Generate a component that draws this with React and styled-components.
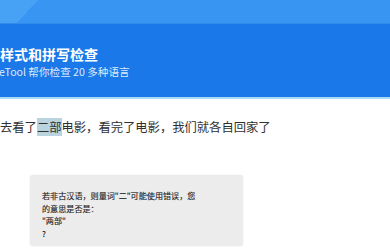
import React from "react";
import styled, { createGlobalStyle } from "styled-components";

const Global = createGlobalStyle`
  html, body { margin: 0; padding: 0; background: #ffffff; }
  body { font-family: "Noto Sans CJK SC", "Noto Sans", sans-serif; overflow: hidden; }
`;

const Page = styled.div`
  width: 390px;
  height: 250px;
  overflow: hidden;
  background: #ffffff;
`;

const Header = styled.header`
  display: flex;
  flex-direction: column;
  border-bottom: 2px solid #a7dbfb;
`;

const TopStrip = styled.div`
  height: 24px;
  background: linear-gradient(132.5deg, #47a2f5 28px, #3895f1 28px);
  box-shadow: inset 0 -1px 0 #2f8be9;
`;

const Banner = styled.div`
  height: 73px;
  box-sizing: border-box;
  background: #1b78e8;
  padding: 21px 0 0 0;
  display: flex;
  flex-direction: column;
  gap: 2px;
  white-space: nowrap;
`;

const Title = styled.h1`
  margin: 0;
  font-size: 14px;
  line-height: 18px;
  font-weight: 700;
  color: #ffffff;
`;

const Subtitle = styled.p`
  margin: 0 0 0 -1px;
  font-size: 10.6px;
  line-height: 14px;
  color: rgba(255, 255, 255, 0.86);
`;

const Body = styled.main`
  display: flex;
  flex-direction: column;
  align-items: flex-start;
  padding-top: 20px;
`;

const Sentence = styled.p`
  margin: 0;
  font-size: 12.3px;
  line-height: 16px;
  color: #303030;
  white-space: nowrap;
`;

const Mark = styled.span`
  background: #b9d4de;
`;

const Popup = styled.div`
  margin: 40px 0 0 30px;
  width: 213px;
  height: 71px;
  box-sizing: border-box;
  padding: 15px 12px 0 12px;
  background: #ececec;
  border-radius: 3px;
  box-shadow: 0 0 2px rgba(0, 0, 0, 0.1);
  font-size: 8.1px;
  line-height: 12.6px;
  color: #222222;
`;

const PopupLine = styled.div`
  white-space: nowrap;
  -webkit-text-stroke: 0.12px #222222;
`;

export default function App() {
  return (
    <Page>
      <Global />
      <Header>
        <TopStrip />
        <Banner>
          <Title>样式和拼写检查</Title>
          <Subtitle>eTool 帮你检查 20 多种语言</Subtitle>
        </Banner>
      </Header>
      <Body>
        <Sentence>
          去看了<Mark>二部</Mark>电影，看完了电影，我们就各自回家了
        </Sentence>
        <Popup>
          <PopupLine>若非古汉语，则量词"二"可能使用错误，您</PopupLine>
          <PopupLine>的意思是否是：</PopupLine>
          <PopupLine>"两部"</PopupLine>
          <PopupLine>?</PopupLine>
        </Popup>
      </Body>
    </Page>
  );
}
